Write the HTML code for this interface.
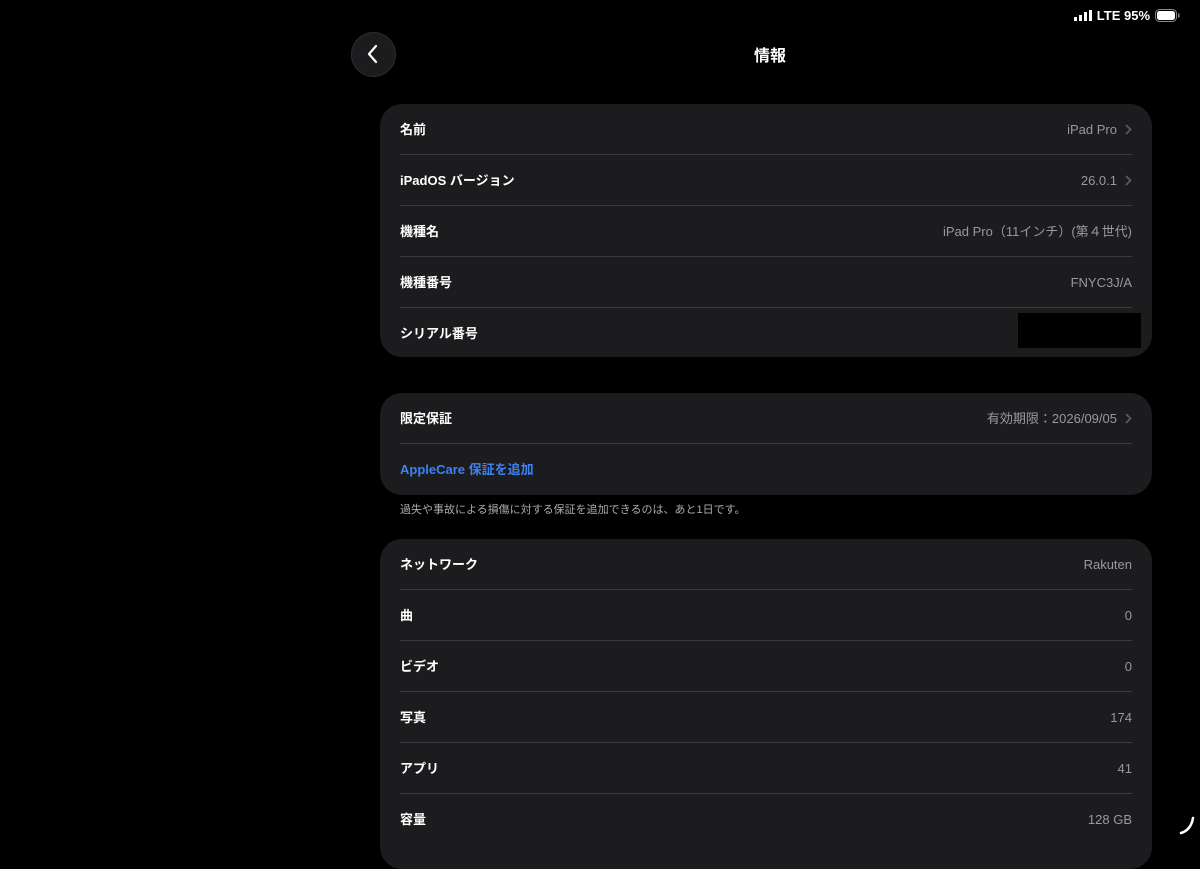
<!DOCTYPE html>
<html><head><meta charset="utf-8"><style>
*{margin:0;padding:0;box-sizing:border-box}
body{width:1200px;height:839px;background:#000;overflow:hidden;position:relative;font-family:"Liberation Sans","Noto Sans CJK JP",sans-serif;color:#fff}
.card{position:absolute;left:380px;width:772px;background:#1c1c1e;border-radius:22px}
.row{position:relative;height:51px;display:flex;align-items:center;justify-content:space-between;padding:0 20px;font-size:13px;font-weight:bold;line-height:16px}
.row+.row::before{content:"";position:absolute;top:-1px;left:20px;right:20px;height:1px;background:#3a3a3c}
.v{color:#98989d;font-weight:normal;font-size:13px;display:flex;align-items:center}
.ch{margin-left:8px}
</style></head><body>
<div style="position:absolute;right:20px;top:8px;font-size:13px;font-weight:bold;display:flex;align-items:center;gap:5px">
<svg width="18" height="11"><rect x="0" y="7" width="3" height="4" fill="#fff"/><rect x="5" y="5" width="3" height="6" fill="#fff"/><rect x="10" y="2" width="3" height="9" fill="#fff"/><rect x="15" y="0" width="3" height="11" fill="#fff"/></svg>
<span>LTE 95%</span>
<svg width="25" height="13"><rect x="0.5" y="0.5" width="21" height="12" rx="4" fill="none" stroke="#888"/><rect x="2" y="2" width="18" height="9" rx="2.5" fill="#fff"/><rect x="23" y="4.5" width="1.5" height="4" fill="#888"/></svg>
</div>
<div style="position:absolute;left:351px;top:32px;width:45px;height:45px;border-radius:50%;background:#1c1c1e;border:1px solid #2c2c2e"></div>
<svg style="position:absolute;left:366px;top:44px" width="14" height="20"><path d="M10 2 L3 10 L10 18" stroke="#fff" stroke-width="2.2" fill="none" stroke-linecap="round" stroke-linejoin="round"/></svg>
<div style="position:absolute;left:0;width:1540px;top:42px;text-align:center;font-size:16px;font-weight:bold">情報</div>

<div class="card" style="top:104px;height:253px">
<div class="row"><span>名前</span><span class="v">iPad Pro<svg class="ch" width="7" height="11"><path d="M1 1 L5.5 5.5 L1 10" stroke="#5a5a5e" stroke-width="1.8" fill="none"/></svg></span></div>
<div class="row"><span>iPadOS バージョン</span><span class="v">26.0.1<svg class="ch" width="7" height="11"><path d="M1 1 L5.5 5.5 L1 10" stroke="#5a5a5e" stroke-width="1.8" fill="none"/></svg></span></div>
<div class="row"><span>機種名</span><span class="v">iPad Pro（11インチ）(第４世代)</span></div>
<div class="row"><span>機種番号</span><span class="v">FNYC3J/A</span></div>
<div class="row"><span>シリアル番号</span><span></span></div>
</div>
<div style="position:absolute;left:1018px;top:313px;width:123px;height:35px;background:#000"></div>

<div class="card" style="top:393px;height:102px">
<div class="row"><span>限定保証</span><span class="v">有効期限：2026/09/05<svg class="ch" width="7" height="11"><path d="M1 1 L5.5 5.5 L1 10" stroke="#5a5a5e" stroke-width="1.8" fill="none"/></svg></span></div>
<div class="row"><span style="color:#3b82f6">AppleCare 保証を追加</span></div>
</div>
<div style="position:absolute;left:400px;top:501px;font-size:11px;color:#aaa">過失や事故による損傷に対する保証を追加できるのは、あと1日です。</div>

<div class="card" style="top:539px;height:330px">
<div class="row"><span>ネットワーク</span><span class="v">Rakuten</span></div>
<div class="row"><span>曲</span><span class="v">0</span></div>
<div class="row"><span>ビデオ</span><span class="v">0</span></div>
<div class="row"><span>写真</span><span class="v">174</span></div>
<div class="row"><span>アプリ</span><span class="v">41</span></div>
<div class="row"><span>容量</span><span class="v">128 GB</span></div>
</div>
<svg style="position:absolute;left:1178px;top:816px" width="18" height="20"><path d="M15 2 Q13 14 3 17" stroke="#fff" stroke-width="2.5" fill="none" stroke-linecap="round"/></svg>
</body></html>
